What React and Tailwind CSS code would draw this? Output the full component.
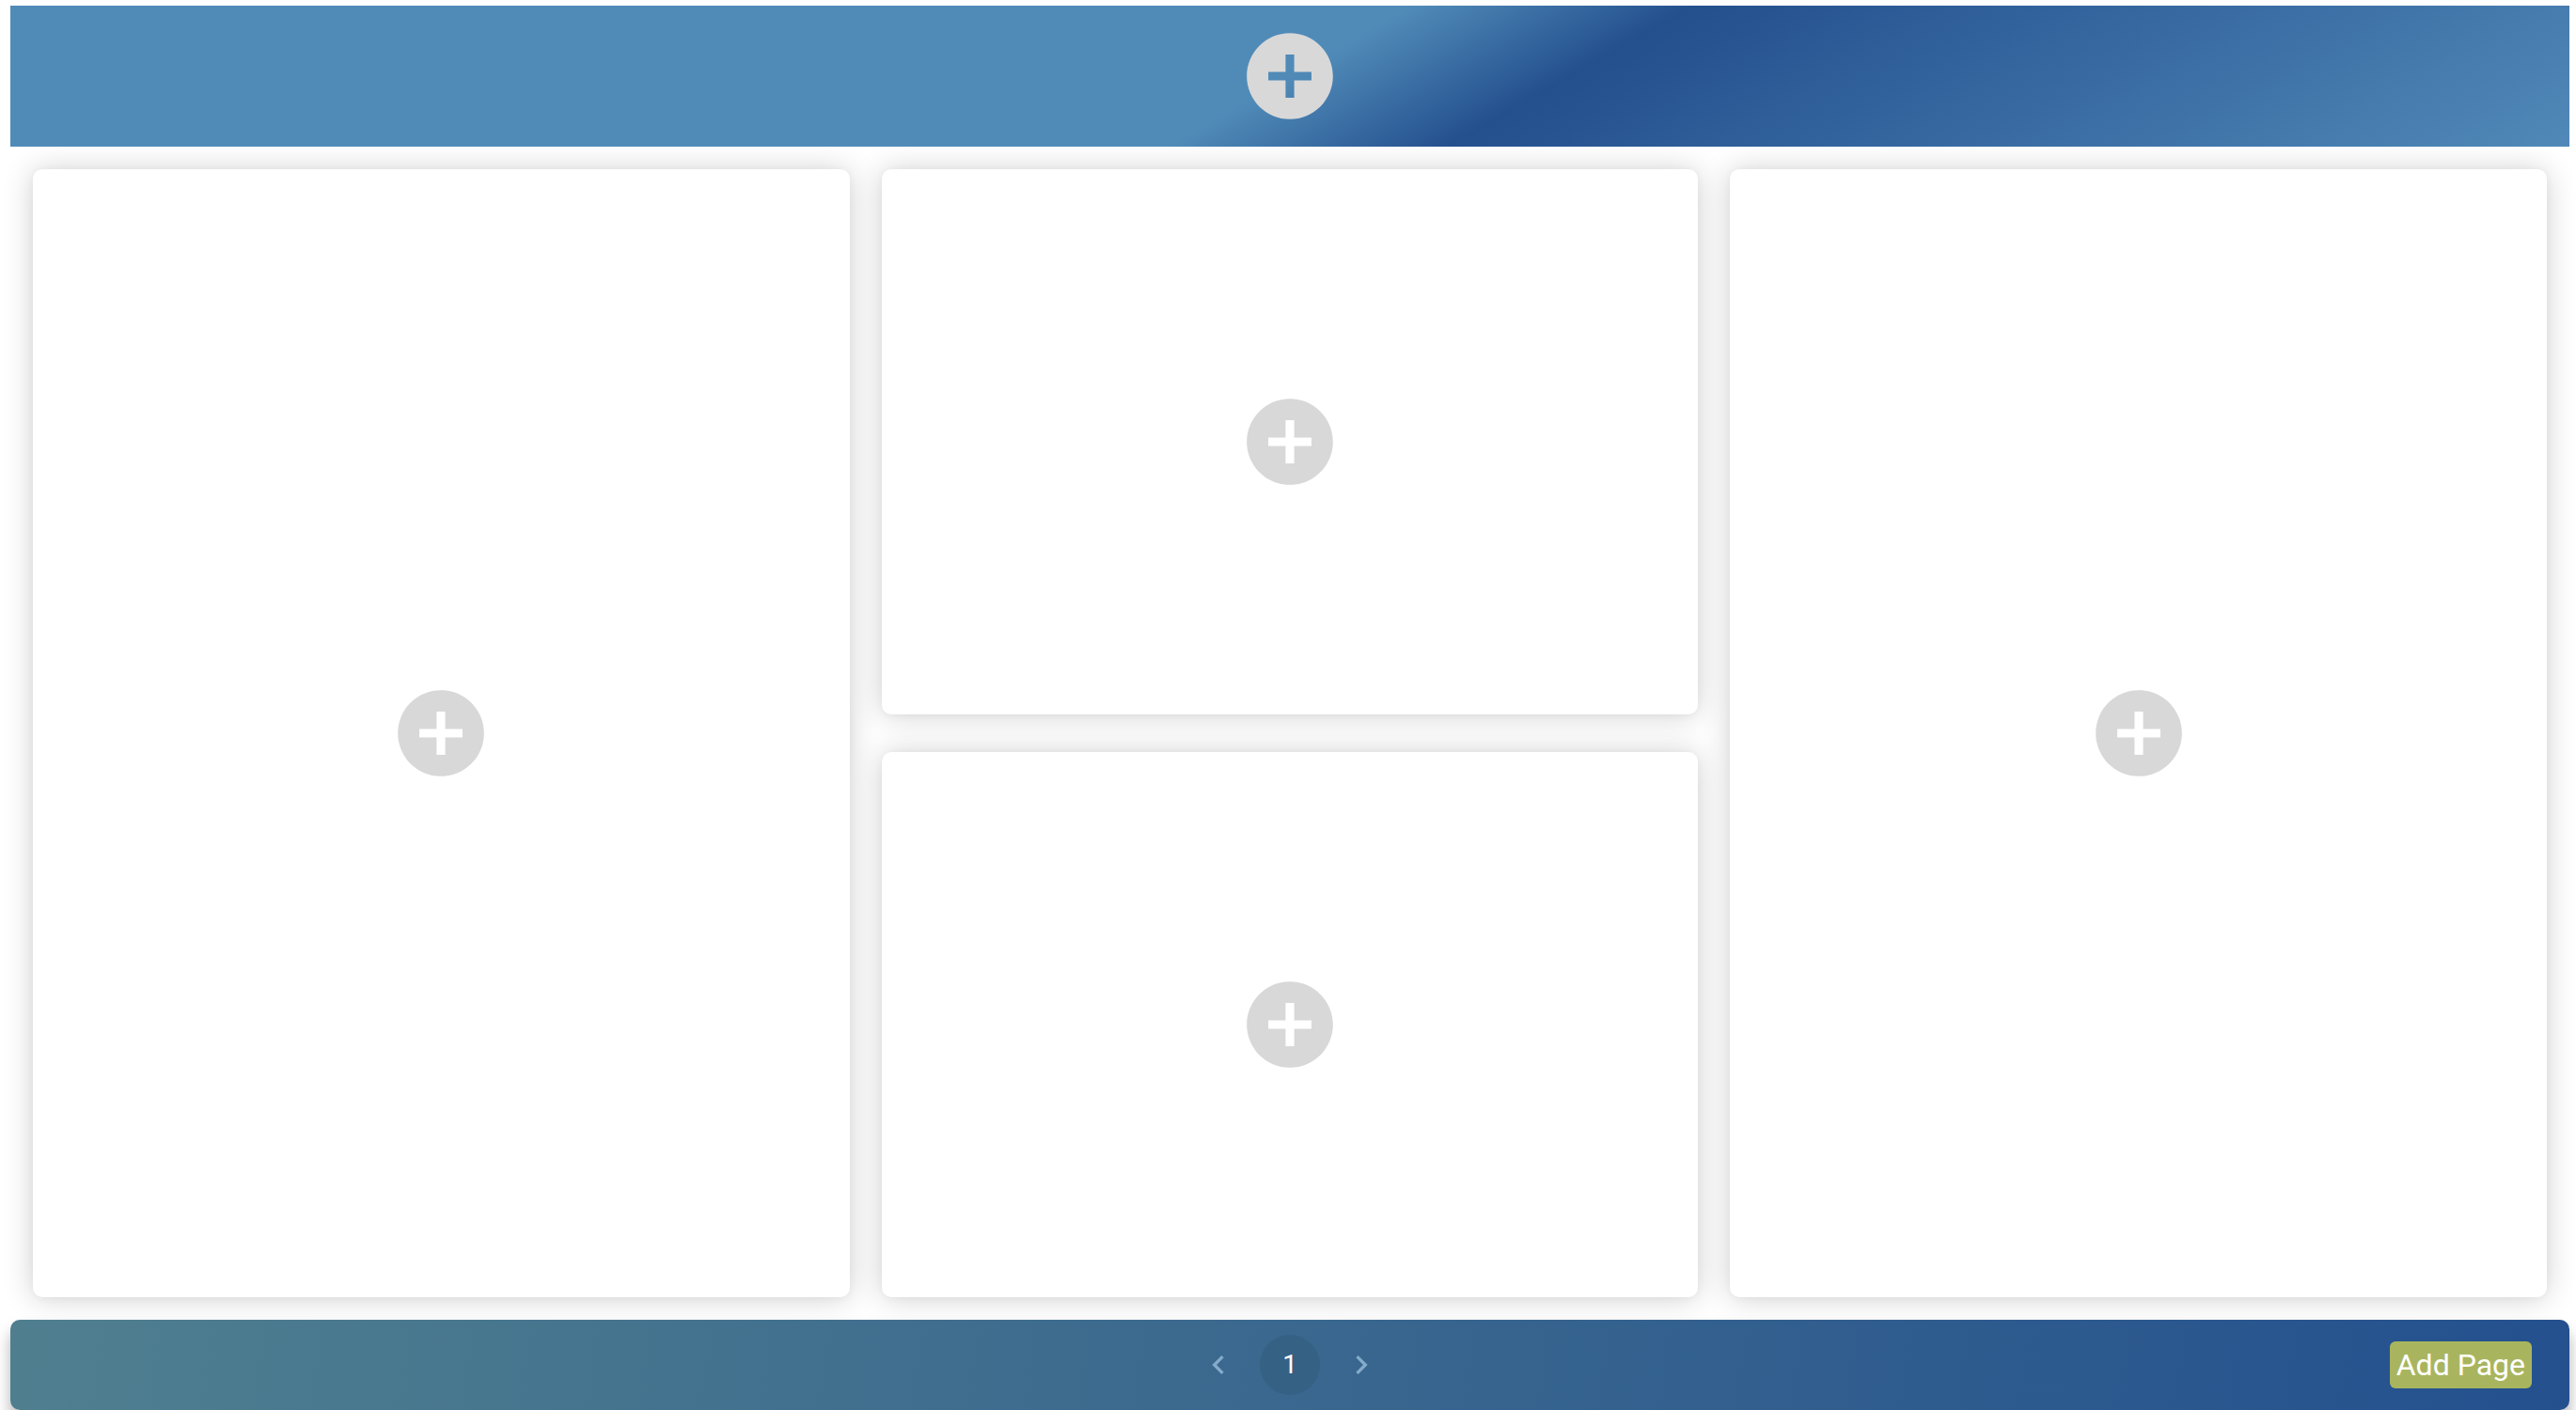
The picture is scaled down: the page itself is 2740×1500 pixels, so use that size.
import React from "react";

function AddButton({ label }) {
  return (
    <button
      type="button"
      aria-label={label}
      className="flex h-[110px] w-[110px] cursor-pointer items-center justify-center rounded-full text-[#d8d8d8]"
    >
      <svg viewBox="0 0 24 24" fill="currentColor" className="h-full w-full" aria-hidden="true">
        <path d="M12 2C6.48 2 2 6.48 2 12s4.48 10 10 10 10-4.48 10-10S17.52 2 12 2zm5 11h-4v4h-2v-4H7v-2h4V7h2v4h4v2z" />
      </svg>
    </button>
  );
}

function Card({ label }) {
  return (
    <section className="flex flex-1 items-center justify-center rounded-[10px] bg-white shadow-[0_1px_8px_rgba(0,0,0,0.04),0_1px_32px_rgba(0,0,0,0.19)]">
      <AddButton label={label} />
    </section>
  );
}

function ArrowButton({ label, path }) {
  return (
    <button
      type="button"
      disabled
      aria-label={label}
      className="flex h-16 w-16 items-center justify-center rounded-full text-[#85abcb]"
    >
      <svg viewBox="0 0 24 24" fill="currentColor" className="h-10 w-10" aria-hidden="true">
        <path d={path} />
      </svg>
    </button>
  );
}

export default function App() {
  return (
    <div className="flex min-h-screen flex-col overflow-hidden bg-white pt-1.5 pr-[7px] pl-[11px] font-['Roboto',sans-serif]">
      <header className="relative z-10 flex h-[150px] items-center justify-center bg-[linear-gradient(150deg,#508bb8_50%,#24508e_60%,#5089b8_100%)]">
        <AddButton label="Add header content" />
      </header>

      <main className="grid flex-1 grid-cols-3 gap-[34px] p-6">
        <div className="flex flex-col">
          <Card label="Add left content" />
        </div>
        <div className="flex flex-col gap-10">
          <Card label="Add top center content" />
          <Card label="Add bottom center content" />
        </div>
        <div className="flex flex-col">
          <Card label="Add right content" />
        </div>
      </main>

      <footer className="relative grid h-24 grid-cols-[1fr_auto_1fr] items-center rounded-[10px] bg-[linear-gradient(100deg,#4f7f8f,#24508e)] px-10 shadow-[0_12px_16px_rgba(0,0,0,0.3)]">
        <nav aria-label="Pagination" className="col-start-2 flex items-center gap-3">
          <ArrowButton
            label="Previous page"
            path="M15.41 7.41L14 6l-6 6 6 6 1.41-1.41L10.83 12z"
          />
          <button
            type="button"
            aria-current="page"
            className="flex h-16 w-16 items-center justify-center rounded-full bg-[#356185] text-[28px] leading-10 text-white"
          >
            1
          </button>
          <ArrowButton label="Next page" path="M10 6L8.59 7.41 13.17 12l-4.58 4.59L10 18l6-6z" />
        </nav>
        <button
          type="button"
          className="h-[50px] justify-self-end rounded-md bg-[#a9b55e] px-[7px] text-[32px] leading-10 text-white"
        >
          Add Page
        </button>
      </footer>
    </div>
  );
}
